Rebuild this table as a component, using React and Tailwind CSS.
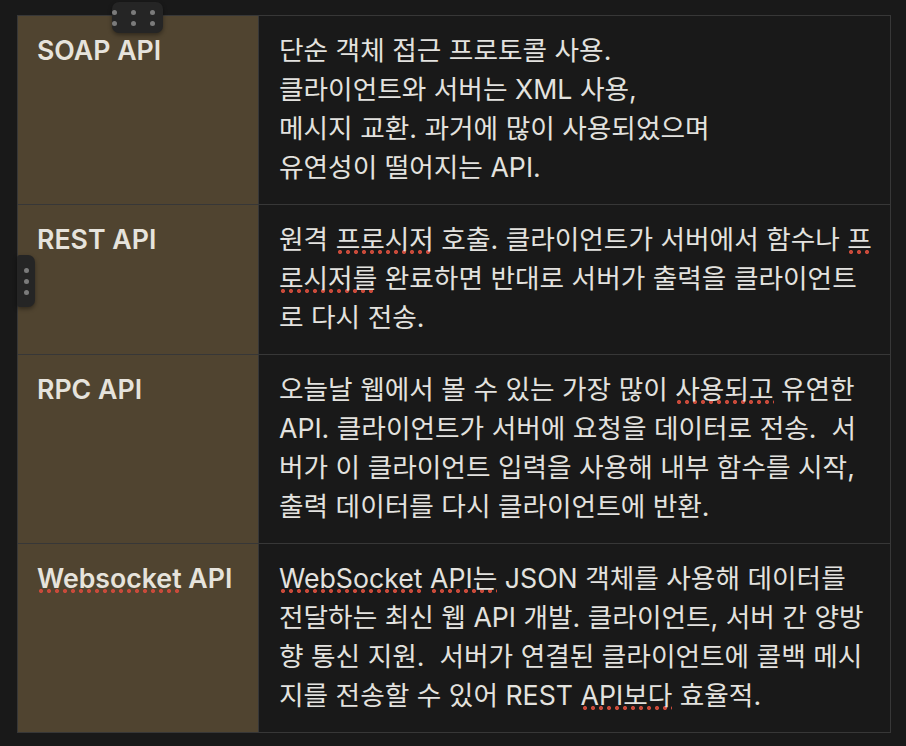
const rows = [
  {
    title: "SOAP API",
    lines: [
      "단순 객체 접근 프로토콜 사용.",
      "클라이언트와 서버는 XML 사용,",
      "메시지 교환. 과거에 많이 사용되었으며",
      "유연성이 떨어지는 API.",
    ],
  },
  {
    title: "REST API",
    lines: [
      ["원격 ", { u: "프로시저" }, " 호출. 클라이언트가 서버에서 함수나 ", { u: "프" }],
      [{ u: "로시저를" }, " 완료하면 반대로 서버가 출력을 클라이언트"],
      "로 다시 전송.",
    ],
  },
  {
    title: "RPC API",
    lines: [
      ["오늘날 웹에서 볼 수 있는 가장 많이 ", { u: "사용되고" }, " 유연한"],
      "API. 클라이언트가 서버에 요청을 데이터로 전송.  서",
      "버가 이 클라이언트 입력을 사용해 내부 함수를 시작,",
      "출력 데이터를 다시 클라이언트에 반환.",
    ],
  },
  {
    title: [{ u: "Websocket" }, " API"],
    lines: [
      [{ u: "WebSocket" }, " ", { u: "API는" }, " JSON 객체를 사용해 데이터를"],
      "전달하는 최신 웹 API 개발. 클라이언트, 서버 간 양방",
      "향 통신 지원.  서버가 연결된 클라이언트에 콜백 메시",
      ["지를 전송할 수 있어 REST ", { u: "API보다" }, " 효율적."],
    ],
  },
];

// spell-check squiggle: round red dots under the word
const Spell = ({ children }) => (
  <span className="bg-[radial-gradient(circle,#c94a3a_1.8px,transparent_2.3px)] bg-[length:8px_6px] bg-repeat-x bg-[position:0_100%]">
    {children}
  </span>
);

const renderParts = (parts) => {
  if (typeof parts === "string") return parts;
  return parts.map((p, i) =>
    typeof p === "string" ? <span key={i}>{p}</span> : <Spell key={i}>{p.u}</Spell>
  );
};

export default function App() {
  return (
    <div
      className="relative w-[906px] h-[746px] bg-[#191919] pt-[15px] pl-[17px] overflow-hidden"
      style={{ fontFamily: "Inter, 'Noto Sans CJK KR', sans-serif" }}
    >
      <div className="w-[874px] border border-[#373737] text-[26.7px] leading-[39px] text-[#e3e2df]">
        {rows.map((row, i) => (
          <div
            key={i}
            className={`grid grid-cols-[241px_1fr] ${i > 0 ? "border-t border-[#373737]" : ""}`}
          >
            <div className="bg-[#504430] border-r border-[#373737] pl-[19px] pt-[15px] pb-[17px] font-semibold text-[#e6e3dc] whitespace-nowrap">
              {renderParts(row.title)}
            </div>
            <div className="pl-[20px] pt-[15px] pb-[17px] whitespace-pre">
              {row.lines.map((line, j) => (
                <div key={j}>{renderParts(line)}</div>
              ))}
            </div>
          </div>
        ))}
      </div>

      {/* column drag handle */}
      <div className="absolute left-[112px] top-[2px] w-[51px] h-[31px] rounded-[7px] bg-[#252525] shadow-[0_2px_4px_rgba(0,0,0,0.4)] grid grid-cols-3 gap-x-[6px] gap-y-[6px] content-center justify-center">
        {[0, 1, 2, 3, 4, 5].map((d) => (
          <span key={d} className="w-[5px] h-[5px] rounded-full bg-[#7b7b7b]" />
        ))}
      </div>

      {/* row drag handle */}
      <div className="absolute left-[17px] top-[255px] w-[18px] h-[52px] rounded-r-[7px] rounded-l-[3px] bg-[#252525] shadow-[0_2px_4px_rgba(0,0,0,0.4)] flex flex-col items-center justify-center gap-[6px]">
        {[0, 1, 2].map((d) => (
          <span key={d} className="w-[5px] h-[5px] rounded-full bg-[#7b7b7b]" />
        ))}
      </div>
    </div>
  );
}
